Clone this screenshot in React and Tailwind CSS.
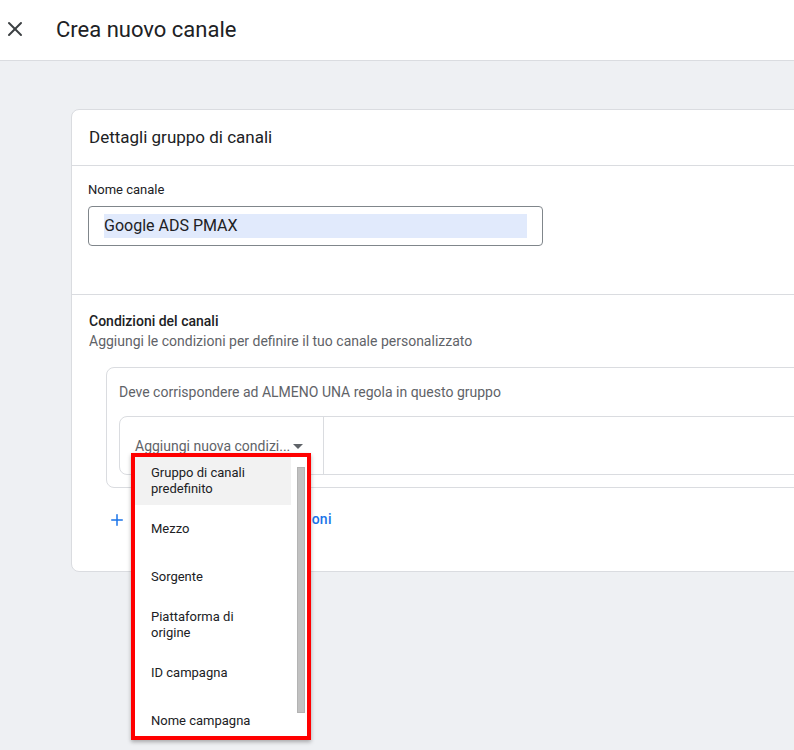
import React from 'react';
import { X, Plus } from 'lucide-react';

const options = [
  ['Gruppo di canali', 'predefinito'],
  ['Mezzo'],
  ['Sorgente'],
  ['Piattaforma di', 'origine'],
  ['ID campagna'],
  ['Nome campagna'],
];

function OptionsMenu() {
  return (
    <div className="absolute left-[11px] top-[36px] w-[180px] h-[287px] border-4 border-[#ff0000] bg-white shadow-[0_2px_4px_rgba(0,0,0,0.3)] z-10">
      <div className="relative h-full overflow-hidden">
        <div className="w-[156px]">
          {options.map((lines, i) => (
            <div
              key={i}
              className={`h-[48px] flex flex-col justify-center pl-[16px] text-[13px] leading-[16px] text-[#202124] ${i === 0 ? 'bg-[#f2f2f2]' : ''}`}
            >
              {lines.map(l => <span key={l}>{l}</span>)}
            </div>
          ))}
        </div>
        <div className="absolute left-[162px] top-[10px] w-[8px] h-[246px] bg-[#c1c1c1] border border-[#b3b3b3]" />
      </div>
    </div>
  );
}

export default function App() {
  return (
    <div className="h-[750px] overflow-hidden bg-[#eef0f3] font-['Roboto',sans-serif] text-[#202124]">
      <header className="h-[61px] bg-white border-b border-[#dadce0] flex items-center">
        <X size={24} strokeWidth={2} className="ml-[3px] mb-[2px] text-[#3c4043]" />
        <h1 className="ml-[29px] mb-[2px] text-[22px] text-[#202124]">Crea nuovo canale</h1>
      </header>

      <main className="pt-[48px] pl-[71px]">
        <div className="w-[760px] bg-white border border-[#dadce0] rounded-lg">
          <div className="h-[56px] flex items-center pl-[17px] border-b border-[#dadce0]">
            <h2 className="text-[17px] text-[#202124]">Dettagli gruppo di canali</h2>
          </div>

          <div className="pl-[16px] pt-[14px] pb-[48px] border-b border-[#dadce0]">
            <div className="text-[13px] leading-[18px] text-[#202124] mt-[1px] mb-[-1px]">Nome canale</div>
            <div className="mt-[8px] w-[455px] h-[40px] border border-[#80868b] rounded-[4px] flex items-center pl-[15px]">
              <span className="w-[423px] h-[24px] bg-[#e1eafc] flex items-center text-[16px] text-[#202124]">Google ADS PMAX</span>
            </div>
          </div>

          <div className="pl-[17px] pt-[17px] pb-[41px]">
            <div className="text-[14px] leading-[18px] font-medium text-[#202124]">Condizioni del canali</div>
            <div className="text-[14px] leading-[22px] text-[#5f6368]">Aggiungi le condizioni per definire il tuo canale personalizzato</div>

            <div className="mt-[15px] ml-[17px] h-[121px] border border-[#dadce0] rounded-lg pl-[12px]">
              <div className="pt-[14px] text-[14px] leading-[20px] text-[#5f6368]">Deve corrispondere ad ALMENO UNA regola in questo gruppo</div>
              <div className="relative mt-[14px] h-[59px] border border-[#dadce0] rounded-l-lg flex">
                <div className="w-[204px] border-r border-[#dadce0] flex items-center pl-[15px] pt-[2px] text-[14px] text-[#5f6368]">
                  <span>Aggiungi nuova condizi...</span>
                  <svg width="10" height="5" viewBox="0 0 10 5" className="ml-[3px]"><path d="M0 0h10L5 5z" fill="#5f6368" /></svg>
                </div>
                <OptionsMenu />
              </div>
            </div>

            <div className="mt-[21px] ml-[19px] flex items-center text-[14px] text-[#1a73e8] font-medium tracking-[0.25px]">
              <Plus size={18} strokeWidth={2} />
              <span className="ml-[12px]">Aggiungi gruppo di condizioni</span>
            </div>
          </div>
        </div>
      </main>
    </div>
  );
}
